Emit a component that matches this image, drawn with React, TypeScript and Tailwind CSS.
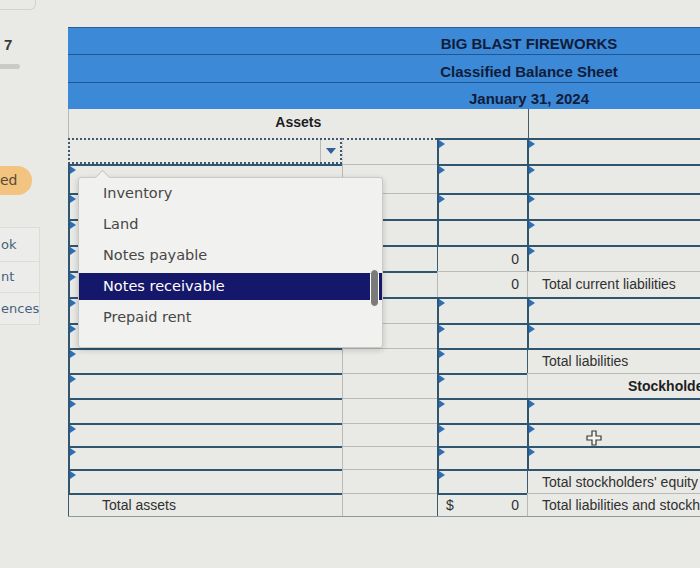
import React from 'react';

type Kind = 'input' | 'inputBare' | 'plain' | 'thick' | 'dropdown' | 'dotted';
interface Cell { kind: Kind; text?: string; num?: string; dollar?: boolean; bold?: boolean }

const ROW_H = [
  'h-[26px]', 'h-[29px]', 'h-[26px]', 'h-[26px]', 'h-[26px]',
  'h-[26px]', 'h-[26px]', 'h-[25px]', 'h-[25px]', 'h-[25px]',
  'h-[25px]', 'h-[23px]', 'h-[23px]', 'h-[24px]', 'h-[23px]',
];

const inp: Cell = { kind: 'input' };
const pl: Cell = { kind: 'plain' };

// col1 | col2 | col3 | col4
const ROWS: Cell[][] = [
  [{ kind: 'dropdown' }, { kind: 'dotted' }, inp, inp],
  [inp, pl, inp, inp],
  [inp, pl, inp, inp],
  [inp, { kind: 'thick' }, { kind: 'inputBare' }, inp],
  [inp, { kind: 'thick' }, { kind: 'thick', num: '0' }, inp],
  [inp, { kind: 'thick' }, { kind: 'plain', num: '0' }, { kind: 'plain', text: 'Total current liabilities' }],
  [inp, { kind: 'thick' }, inp, inp],
  [inp, pl, inp, inp],
  [inp, pl, inp, { kind: 'thick', text: 'Total liabilities' }],
  [inp, pl, inp, { kind: 'plain', text: "Stockholders' Equity", bold: true }],
  [inp, pl, inp, inp],
  [inp, pl, inp, inp],
  [inp, pl, inp, inp],
  [inp, pl, inp, { kind: 'thick', text: "Total stockholders' equity" }],
  [{ kind: 'thick', text: 'Total assets' }, pl, { kind: 'thick', num: '0', dollar: true }, { kind: 'plain', text: 'Total liabilities and stockholders\u2019 equity' }],
];

const COL_W = ['w-[274px]', 'w-[95px]', 'w-[90px]', 'w-[463px]'];

const Marker = () => (
  <span className="absolute left-0 top-0 w-0 h-0 border-y-[4px] border-y-transparent border-l-[6px] border-l-[#2c6fb8]" />
);

const SheetCell: React.FC<{ c: Cell; col: number }> = ({ c, col }) => {
  let cls = 'relative shrink-0 flex items-center ' + COL_W[col] + ' ';
  if (c.kind === 'input' || c.kind === 'inputBare') cls += 'border-t-2 border-l-2 border-[#30566f]';
  else if (c.kind === 'thick') cls += 'border-t-2 border-t-[#30566f] border-l border-l-[#3a5a70]';
  else if (c.kind === 'dropdown') cls += 'border-2 border-dotted border-[#3b5870]';
  else if (c.kind === 'dotted') cls += 'border-t-2 border-dotted border-t-[#3b5870] border-l border-l-[#b9b9b6]';
  else cls += 'border-t border-t-[#b9b9b6] border-l border-l-[#b9b9b6]';

  return (
    <div className={cls}>
      {c.kind === 'input' && <Marker />}
      {c.kind === 'dropdown' && (
        <div className="ml-auto h-full w-[20px] border-l border-[#b9b9b6] flex items-center justify-center">
          <span className="w-0 h-0 border-x-[5px] border-x-transparent border-t-[6px] border-t-[#2f5f9a]" />
        </div>
      )}
      {c.text && !c.bold && (
        <span className={'whitespace-nowrap text-[14px] text-[#303030] ' + (col === 0 ? 'pl-[33px]' : 'pl-[14px]')}>{c.text}</span>
      )}
      {c.text && c.bold && (
        <span className="whitespace-nowrap pl-[100px] text-[14px] font-bold text-[#1e1e1e]">{c.text}</span>
      )}
      {c.num && (
        <div className="flex w-full items-center justify-between pl-[8px] pr-[8px] text-[14px] text-[#303030]">
          <span>{c.dollar ? '$' : ''}</span>
          <span>{c.num}</span>
        </div>
      )}
    </div>
  );
};

const ITEMS = ['Inventory', 'Land', 'Notes payable', 'Notes receivable', 'Prepaid rent'];

const App: React.FC = () => {
  return (
    <div className="relative w-[700px] h-[568px] overflow-hidden bg-[#e9e9e6] font-['Liberation_Sans',Arial,sans-serif]">
      <div className="flex">
        {/* ── Sidebar (cut off) ───────────────────────────── */}
        <div className="w-[68px] shrink-0 h-[568px] relative">
          <div className="w-[36px] h-[10px] border-b border-r border-[#d2d2cf] rounded-br-md" />
          <p className="mt-[27px] pl-[4px] text-[15px] font-semibold text-[#3a3a3a] leading-none">7</p>
          <div className="mt-[12px] w-[20px] h-[5px] bg-[#cacac7] rounded-r" />
          <div className="mt-[97px] ml-[-30px] w-[62px] h-[29px] rounded-full bg-[#f2c47f] flex items-center pl-[30px] text-[14px] text-[#5a4a36] font-['DejaVu_Sans',sans-serif]">
            ed
          </div>
          <div className="mt-[32px] w-[40px] border border-l-0 border-[#dcdcd9] bg-[#ececea] font-['DejaVu_Sans',sans-serif] text-[13px] text-[#46627c]">
            <div className="h-[34px] flex items-center pl-[1px] border-b border-[#dcdcd9]">ok</div>
            <div className="h-[31px] flex items-center pl-[1px] border-b border-[#dcdcd9]">nt</div>
            <div className="h-[31px] flex items-center pl-[1px]">ences</div>
          </div>
        </div>

        {/* ── Sheet ───────────────────────────────────────── */}
        <div className="pt-[27px] shrink-0 w-[922px]">
          <div className="bg-[#3c89d8] border-t border-[#2a5d96] text-[15px] font-bold text-[#101c38]">
            <div className="h-[27px] flex items-center justify-center pt-[7px] border-b border-[#22568f]">BIG BLAST FIREWORKS</div>
            <div className="h-[28px] flex items-center justify-center pt-[7px] border-b border-[#22568f]">Classified Balance Sheet</div>
            <div className="h-[26px] flex items-center justify-center pt-[7px]">January 31, 2024</div>
          </div>
          <div className="flex h-[29px] border-l border-[#b9b9b6]">
            <div className="w-[459px] flex items-end justify-center pb-[5px] text-[14px] font-bold text-[#1e1e1e]">Assets</div>
            <div className="w-[463px] border-l border-[#4a5a66]" />
          </div>
          <div className="border-b border-[#8e9aa2]">
            {ROWS.map((r, i) => (
              <div key={i} className={'flex ' + ROW_H[i]}>
                {r.map((c, j) => <SheetCell key={j} c={c} col={j} />)}
              </div>
            ))}
          </div>
        </div>
      </div>

      {/* ── Dropdown list ──────────────────────────────────── */}
      <div className="absolute left-[78px] top-[177px] w-[305px] h-[171px] bg-[#f1f1ef] border border-[#c9c9c6] rounded-[3px] shadow-[0_2px_6px_rgba(0,0,0,0.18)] font-['DejaVu_Sans',Verdana,sans-serif] text-[14.5px]">
        <span className="absolute left-[18px] top-[-6px] w-[11px] h-[11px] rotate-45 bg-[#f1f1ef] border-l border-t border-[#c9c9c6]" />
        {ITEMS.map(t =>
          t === 'Notes receivable' ? (
            <div key={t} className="h-[27px] my-[2px] flex items-center pl-[24px] bg-[#15176a] text-white">{t}</div>
          ) : (
            <div key={t} className="h-[31px] flex items-center pl-[24px] text-[#474747]">{t}</div>
          )
        )}
        <span className="absolute right-[3px] top-[91px] w-[9px] h-[38px] rounded-full bg-[#7b7b79] border border-white" />
      </div>

      {/* cursor */}
      <svg className="absolute left-[586px] top-[430px]" width="16" height="16" viewBox="0 0 16 16">
        <path d="M6 1h4v5h5v4h-5v5H6v-5H1V6h5z" fill="#f4f4f2" stroke="#3a3a3a" strokeWidth="1.2" />
      </svg>
    </div>
  );
};

export default App;
